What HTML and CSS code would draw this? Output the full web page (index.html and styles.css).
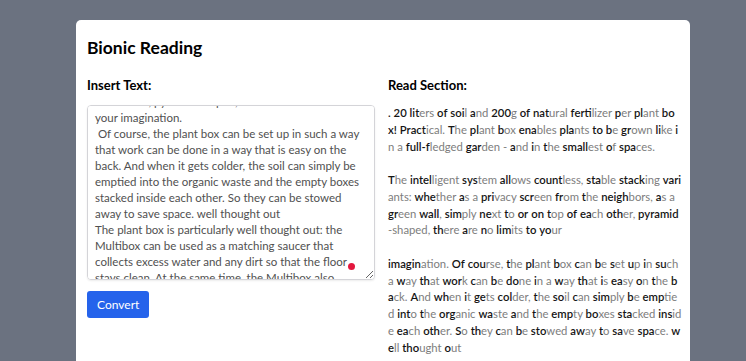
FILE: index.html
```html
<!DOCTYPE html>
<html>
<head>
  <meta name="viewport" content="width=device-width, initial-scale=1.0">
  <link rel="stylesheet" href="styles.css">
</head>
<body>

<div class="card">
  <h1>Bionic Reading</h1>

  <div class="columns">
    <div class="col">
      <h2>Insert Text:</h2>
      <div class="input_wrap">
        <textarea id="input_text" spellcheck="false">The Multibox is the perfect plant box for balconies, terraces and gardens. Each box holds approx. 20 liters of soil and 200g of natural fertilizer per plant box! Practical. The plant box enables plants to be grown like in a full-fledged garden - and in the smallest of spaces.
The intelligent system allows countless, stable stacking variants: whether as a privacy screen from the neighbors, as a green wall, next to or on top of each other, pyramid-shaped, there are no limits to your imagination.
 Of course, the plant box can be set up in such a way that work can be done in a way that is easy on the back. And when it gets colder, the soil can simply be emptied into the organic waste and the empty boxes stacked inside each other. So they can be stowed away to save space. well thought out
The plant box is particularly well thought out: the Multibox can be used as a matching saucer that collects excess water and any dirt so that the floor stays clean. At the same time, the Multibox also serves as a lid, so that the soil is protected from rain and the plants can grow undisturbed. The boxes are made of recycled plastic and are weatherproof, frost-resistant and UV-stable, so they can stay outside all year round.</textarea>
        <span class="red_dot"></span>
      </div>
      <button class="convert_btn" onclick="convert()">Convert</button>
    </div>

    <div class="col">
      <h2>Read Section:</h2>
      <div id="read_section"></div>
    </div>
  </div>
</div>

<script>

// "|" marks where the bold fixation part of a word ends
var paragraphs = [
  ". 20 lit|ers of soi|l a|nd 200|g of nat|ural ferti|lizer p|er pl|ant box! Pract|ical. T|he pl|ant b|ox ena|bles pla|nts to b|e gr|own li|ke i|n |a full-f|ledged gar|den |- a|nd i|n t|he small|est o|f spa|ces.",
  "T|he intel|ligent sys|tem all|ows count|less, sta|ble stack|ing vari|ants: whe|ther a|s |a pri|vacy scr|een fr|om t|he neigh|bors, a|s |a gr|een wall|, sim|ply ne|xt t|o or on t|op of ea|ch oth|er, pyramid|-shaped, th|ere a|re n|o lim|its to yo|ur",
  "imagin|ation. Of cou|rse, t|he pl|ant b|ox c|an b|e s|et u|p i|n su|ch |a w|ay th|at wor|k c|an b|e do|ne i|n |a w|ay th|at i|s ea|sy o|n t|he ba|ck. A|nd wh|en i|t ge|ts col|der, t|he so|il c|an sim|ply b|e emp|tied int|o t|he org|anic wa|ste a|nd t|he emp|ty bo|xes sta|cked ins|ide ea|ch oth|er. S|o th|ey c|an b|e sto|wed aw|ay t|o sa|ve spa|ce. we|ll tho|ught o|ut",
  "T|he pl|ant b|ox i|s partic|ularly we|ll tho|ught o|ut: t|he Multi|box c|an b|e us|ed a|s |a mat|ching sau|cer th|at coll|ects exc|ess wat|er a|nd an|y di|rt s|o th|at t|he fl|oor st|ays cl|ean."
];

function bionicWord(word) {
  var parts = word.split("|");
  if (parts.length == 1) return "<b>" + word + "</b>";
  return "<b>" + parts[0] + "</b>" + parts[1];
}

function convert() {
  var out = "";
  for (var i = 0; i < paragraphs.length; i++) {
    var words = paragraphs[i].split(" ");
    var html = [];
    for (var j = 0; j < words.length; j++) {
      html.push(bionicWord(words[j]));
    }
    out += "<p>" + html.join(" ") + "</p>";
  }
  document.getElementById("read_section").innerHTML = out;
}

convert();

document.getElementById("input_text").scrollTop = 160;

</script>

</body>
</html>
```

FILE: styles.css
```css
html {
  height: 100%;
}
body {
  height: 100%;
  margin: 0;
  background-color: #6b7280;
  font-family: Lato, "Open Sans", sans-serif;
  overflow: hidden;
}

.card {
  margin: 20px 56px 0 76px;
  padding: 16px 8px 40px 11px;
  background-color: #fff;
  border-radius: 5px;
  min-height: 400px;
}

h1 {
  margin: 0 0 16px 0;
  font-size: 17.5px;
  line-height: 24px;
  font-weight: bold;
  color: #000;
}

h2 {
  margin: 0 0 11px 0;
  font-size: 13px;
  line-height: 18px;
  font-weight: bold;
  color: #000;
}

.columns {
  display: grid;
  grid-template-columns: 288px 1fr;
  gap: 13px;
}

.input_wrap {
  position: relative;
  height: 175px;
}

#input_text {
  box-sizing: border-box;
  width: 100%;
  height: 175px;
  margin: 0;
  padding: 4px 7px;
  border: 1px solid #d4d4d8;
  border-radius: 4px;
  box-shadow: 0 1px 2px rgba(0, 0, 0, 0.08);
  font-family: Lato, "Open Sans", sans-serif;
  font-size: 11.5px;
  line-height: 16px;
  color: #505050;
  resize: vertical;
  outline: none;
}

.red_dot {
  position: absolute;
  left: 261px;
  top: 158px;
  width: 7px;
  height: 7px;
  border-radius: 50%;
  background-color: #e3173e;
}

.convert_btn {
  margin-top: 11px;
  padding: 5px 10px;
  border: none;
  border-radius: 3px;
  background-color: #2563eb;
  color: #fff;
  font-family: Lato, "Open Sans", sans-serif;
  font-size: 12px;
  line-height: 17px;
}

#read_section {
  word-break: break-all;
  font-size: 11.3px;
  line-height: 16.75px;
  color: #7d7d7d;
}

#read_section p {
  margin: 0 0 16.75px 0;
}

#read_section b {
  font-weight: 600;
  color: #151515;
}
```
